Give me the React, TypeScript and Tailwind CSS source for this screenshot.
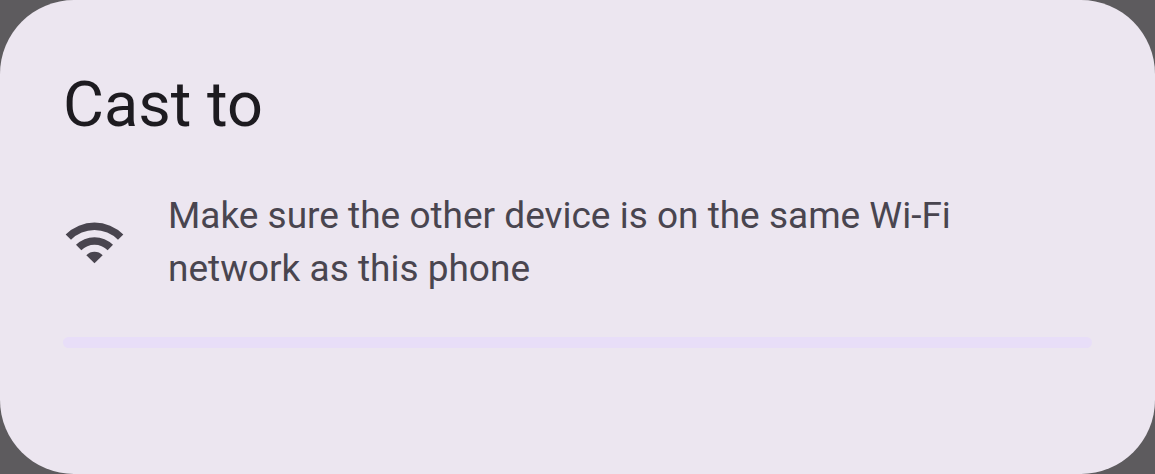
export default function App() {
  return (
    <main className="min-h-screen bg-[#5d5b5e] font-['Roboto',sans-serif]">
      <section
        aria-labelledby="cast-title"
        className="flex min-h-screen flex-col rounded-[74px] bg-[#ece6f0] px-[63px] pt-[63px] pb-[63px]"
      >
        <h1 id="cast-title" className="text-[63px] leading-[84px] text-[#1d1b20]">
          Cast to
        </h1>
        <div className="mt-[42px] flex items-center gap-[42px]">
          <svg viewBox="0 0 189 189" className="size-[63px] shrink-0 fill-[#49454f]" aria-hidden="true">
            <path d="M8 70.5A122.5 122.5 0 0 1 181 70.5L165 86.5A99.5 99.5 0 0 0 24 86.5Z" />
            <path d="M39 101.5A78.5 78.5 0 0 1 150 101.5L134 117.5A56 56 0 0 0 55 117.5Z" />
            <path d="M70 132.5A34.6 34.6 0 0 1 119 132.5L94.5 157Z" />
          </svg>
          <p className="max-w-[840px] text-[37px] leading-[53px] text-[#49454f]">
            Make sure the other device is on the same Wi-Fi network as this phone
          </p>
        </div>
        <div
          role="progressbar"
          aria-label="Searching for devices"
          className="mt-[42px] h-[11px] rounded-full bg-[#e8def8]"
        />
      </section>
    </main>
  );
}
